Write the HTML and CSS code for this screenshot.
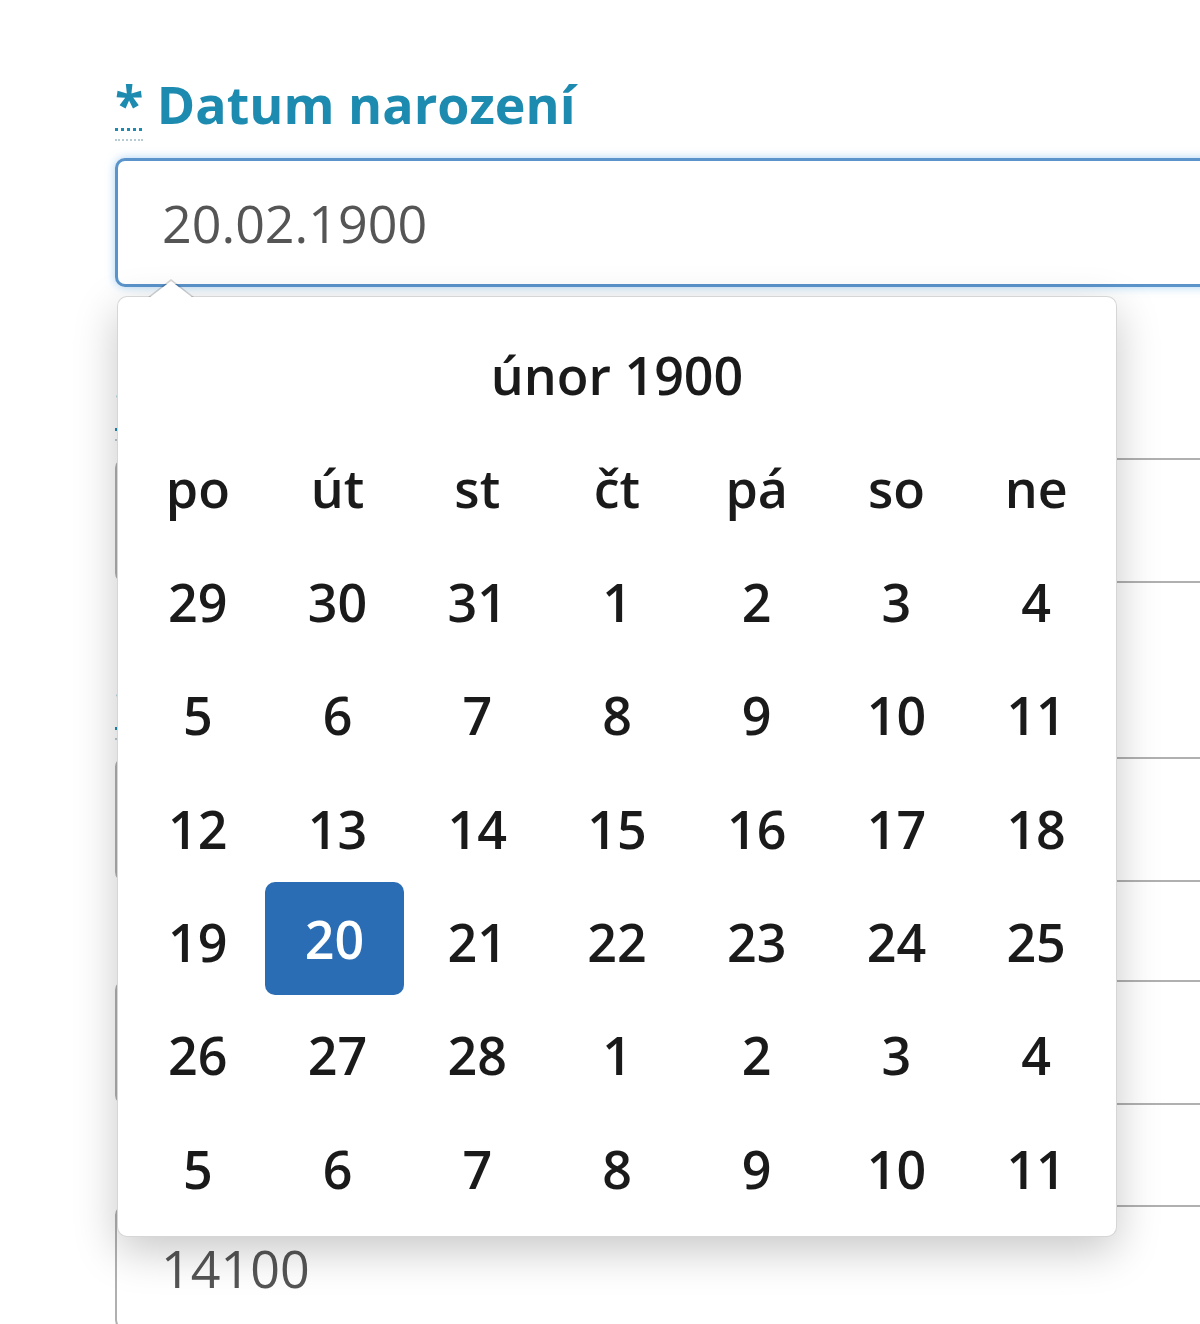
FILE: index.html
```html
<!DOCTYPE html>
<html lang="cs">
<head>
  <meta charset="UTF-8" />
  <title>Datum narození</title>
  <link rel="stylesheet" href="styles.css">
</head>
<body>

  <!-- Personal data form -->
  <form class="form">
    <div class="field">
      <label class="field-label" for="birth"><abbr title="povinné">*</abbr> Datum narození</label>
      <input class="text-input focus" type="text" id="birth" value="20.02.1900" readonly>
    </div>

    <!-- fields below are covered by the popup, only their edges show -->
    <div class="field field-a">
      <label class="field-label" for="street"><abbr title="povinné">*</abbr></label>
      <input class="text-input" type="text" id="street" value="" readonly>
    </div>

    <div class="field field-b">
      <label class="field-label" for="city"><abbr title="povinné">*</abbr></label>
      <input class="text-input" type="text" id="city" value="" readonly>
    </div>

    <div class="field field-c">
      <label class="field-label" for="part"></label>
      <input class="text-input" type="text" id="part" value="" readonly>
    </div>

    <div class="field field-d">
      <label class="field-label" for="zip"></label>
      <input class="text-input" type="text" id="zip" value="14100" readonly>
    </div>

    <!-- Date picker popup -->
    <div class="datepicker">
      <div class="dp-title">únor 1900</div>

      <div class="dp-dow">po</div>
      <div class="dp-dow">út</div>
      <div class="dp-dow">st</div>
      <div class="dp-dow">čt</div>
      <div class="dp-dow">pá</div>
      <div class="dp-dow">so</div>
      <div class="dp-dow">ne</div>

      <div class="dp-day">29</div>
      <div class="dp-day">30</div>
      <div class="dp-day">31</div>
      <div class="dp-day">1</div>
      <div class="dp-day">2</div>
      <div class="dp-day">3</div>
      <div class="dp-day">4</div>

      <div class="dp-day">5</div>
      <div class="dp-day">6</div>
      <div class="dp-day">7</div>
      <div class="dp-day">8</div>
      <div class="dp-day">9</div>
      <div class="dp-day">10</div>
      <div class="dp-day">11</div>

      <div class="dp-day">12</div>
      <div class="dp-day">13</div>
      <div class="dp-day">14</div>
      <div class="dp-day">15</div>
      <div class="dp-day">16</div>
      <div class="dp-day">17</div>
      <div class="dp-day">18</div>

      <div class="dp-day">19</div>
      <div class="dp-day selected">20</div>
      <div class="dp-day">21</div>
      <div class="dp-day">22</div>
      <div class="dp-day">23</div>
      <div class="dp-day">24</div>
      <div class="dp-day">25</div>

      <div class="dp-day">26</div>
      <div class="dp-day">27</div>
      <div class="dp-day">28</div>
      <div class="dp-day">1</div>
      <div class="dp-day">2</div>
      <div class="dp-day">3</div>
      <div class="dp-day">4</div>

      <div class="dp-day">5</div>
      <div class="dp-day">6</div>
      <div class="dp-day">7</div>
      <div class="dp-day">8</div>
      <div class="dp-day">9</div>
      <div class="dp-day">10</div>
      <div class="dp-day">11</div>
    </div>
  </form>

</body>
</html>
```

FILE: styles.css
```css
body {
  margin: 0;
  background-color: #fff;
  font-family: 'Open Sans', 'Noto Sans', sans-serif;
  overflow: hidden;
}

.form {
  position: relative;
  padding: 69px 0 0 115px;
}

.field-label {
  display: block;
  height: 70px;
  font-size: 52px;
  line-height: 70px;
  font-weight: 700;
  color: #1d8bb0;
  margin-bottom: 19px;
  white-space: nowrap;
}

.field-label abbr {
  text-decoration: underline dotted #1d8bb0;
  text-decoration-thickness: 3px;
  text-underline-offset: 4px;
  border-bottom: 2px dotted #b9cbd2;
}

.text-input {
  display: block;
  box-sizing: border-box;
  width: 1200px;
  height: 125px;
  margin: 0;
  padding: 0 44px;
  border: 2px solid #b0b0b0;
  border-radius: 10px;
  background-color: #fff;
  font-family: 'Open Sans', 'Noto Sans', sans-serif;
  font-size: 52px;
  font-weight: 400;
  color: #555;
  outline: none;
}

.text-input.focus {
  height: 129px;
  border: 3px solid #5b94cb;
  box-shadow: 0 0 10px rgba(102, 175, 233, 0.55);
}

.field-a { margin-top: 82px; }
.field-b { margin-top: 85px; }
.field-c { margin-top: 9px; }
.field-d { margin-top: 11px; }

.datepicker {
  position: absolute;
  top: 296px;
  left: 117px;
  box-sizing: border-box;
  width: 1000px;
  height: 941px;
  padding: 21px 10px 12px;
  background-color: #fff;
  border: 1px solid rgba(0, 0, 0, 0.16);
  border-radius: 10px;
  box-shadow: 0 14px 44px rgba(0, 0, 0, 0.22);
  display: grid;
  grid-template-columns: repeat(7, 1fr);
  grid-auto-rows: 113.4px;
  color: #1a1a1a;
  font-size: 52px;
  font-weight: 600;
}

.datepicker::before,
.datepicker::after {
  content: '';
  position: absolute;
  border-left: 23px solid transparent;
  border-right: 23px solid transparent;
}

.datepicker::before {
  top: -18px;
  left: 30px;
  border-bottom: 18px solid rgba(0, 0, 0, 0.16);
}

.datepicker::after {
  top: -16px;
  left: 31px;
  border-left-width: 22px;
  border-right-width: 22px;
  border-bottom: 17px solid #fff;
}

.dp-title {
  grid-column: 1 / -1;
  text-align: center;
  line-height: 113.4px;
}

.dp-dow,
.dp-day {
  text-align: center;
  line-height: 113.4px;
}

.dp-day.selected {
  margin: -3px 3px 3px -3px;
  background-color: #2a6db5;
  color: #fff;
  border-radius: 10px;
}
```
